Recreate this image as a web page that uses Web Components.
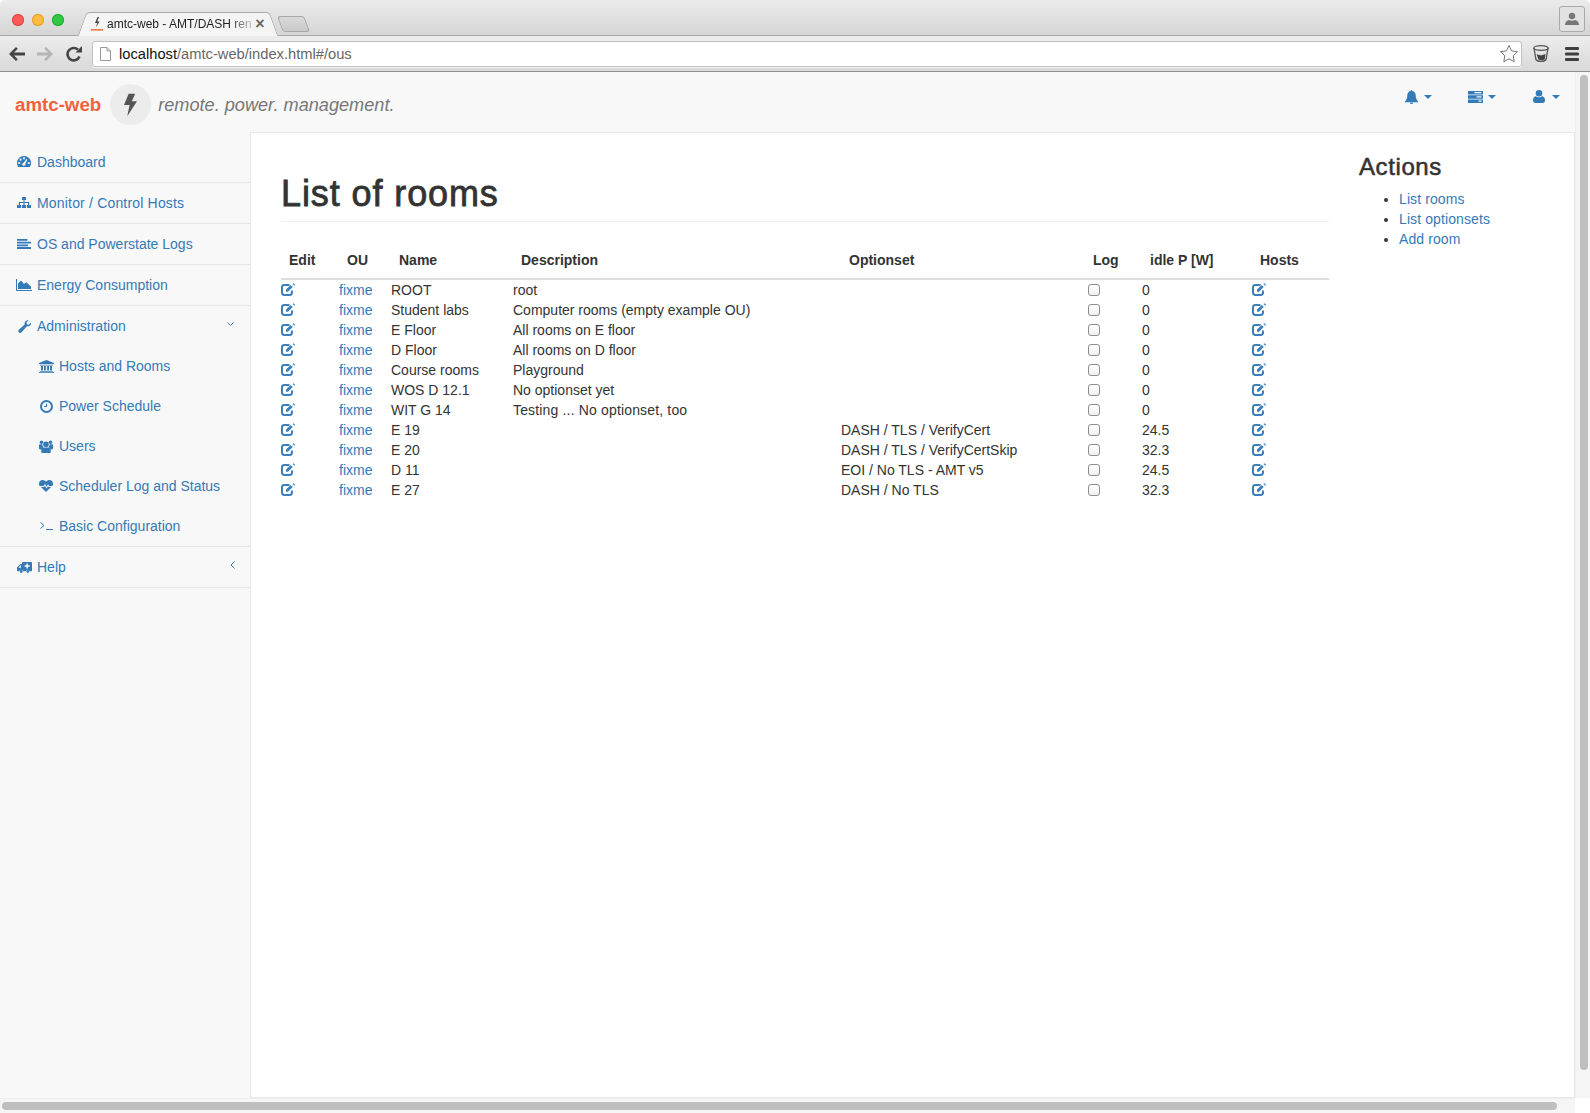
<!doctype html>
<html lang="en"><head><meta charset="utf-8"><title>amtc-web - AMT/DASH remote power management</title>
<style>
html,body{margin:0;height:100%;overflow:hidden;background:#fff}
body{font:14px/20px "Liberation Sans",Arial,sans-serif;color:#333}
</style></head>
<body>
<app-page>
  <browser-chrome slot="chrome"></browser-chrome>
  <top-nav slot="top"></top-nav>
  <side-nav slot="side">
    <nav-item icon="dashboard">Dashboard</nav-item>
    <nav-item icon="sitemap"><span style="letter-spacing:.18px">Monitor / Control Hosts</span></nav-item>
    <nav-item icon="lines">OS and Powerstate Logs</nav-item>
    <nav-item icon="area">Energy Consumption</nav-item>
    <nav-group icon="wrench" label="Administration" open>
      <nav-item sub icon="bank">Hosts and Rooms</nav-item>
      <nav-item sub icon="clock">Power Schedule</nav-item>
      <nav-item sub icon="users">Users</nav-item>
      <nav-item sub icon="heartbeat">Scheduler Log and Status</nav-item>
      <nav-item sub icon="terminal">Basic Configuration</nav-item>
    </nav-group>
    <nav-group icon="ambulance" label="Help"></nav-group>
  </side-nav>
  <rooms-view slot="main"></rooms-view>
  <actions-panel slot="aside"></actions-panel>
</app-page>
<script>
const ICONS={
 dashboard:[14,11,'<path d="M7 0C3.1 0 0 3.1 0 7c0 1.5.4 2.8 1.2 4h11.6c.8-1.2 1.2-2.5 1.2-4 0-3.9-3.1-7-7-7z"/><g fill="#f8f8f8"><circle cx="2.2" cy="7" r="1.1"/><circle cx="3.6" cy="3.7" r="1.1"/><circle cx="7" cy="2.3" r="1.1"/><circle cx="11.8" cy="7" r="1.1"/><circle cx="6.8" cy="8.2" r="1.5"/><path d="M6.2 7.6 9.4 2.9l1 .5-2.4 5z"/></g>'],
 sitemap:[14,11,'<path d="M5 0h4v3H5zM0 8h4v3H0zM5 8h4v3H5zM10 8h4v3h-4zM6.5 3h1v2h4.5v3h-1V6H7.5v2h-1V6H3v2H2V5h4.5z"/>'],
 lines:[14,10,'<path d="M0 0h10.5v1.8H0zM0 2.7h14v1.8H0zM0 5.4h11v1.8H0zM0 8.1h14v1.8H0z"/>'],
 area:[16,12,'<path d="M0 0h1v11h15v1H0z"/><path d="M2 10V4.5L5 1.5l3 3.6 2.2-1.8L15 7.5V10z"/>'],
 wrench:[13,13,'<path d="M12.8 2.6c.3.9.1 1.9-.5 2.7-.8 1-2.2 1.4-3.4 1L3.6 12.3c-.7.7-1.9.8-2.6.1-.8-.7-.8-1.9-.1-2.6l5.8-5.4c-.4-1.2 0-2.5 1-3.4.8-.7 1.9-1 2.9-.8L8.5 2.4l.4 1.9 1.8.5z"/>'],
 bank:[15,13,'<path d="M7.5 0 15 3v1H0V3zM1 4.8h13v.8H1zM2 6h2v4.5H2zM5 6h1.900v4.500H5zM8.100 6H10v4.500H8.100zM11 6h2v4.500h-2zM1 11h13v.8H1zM0 12.200h15V13H0z"/>'],
 clock:[13,13,'<path fill-rule="evenodd" d="M6.500 0a6.500 6.500 0 1 0 0 13 6.500 6.500 0 0 0 0-13zm0 2a4.500 4.500 0 1 1 0 9 4.500 4.500 0 0 1 0-9z"/><path d="M6 3.500h1.100v3.600H4v-1h2z"/>'],
 users:[14,13,'<circle cx="7" cy="4.300" r="2.800"/><circle cx="2.500" cy="2.300" r="1.800"/><circle cx="11.500" cy="2.300" r="1.800"/><path d="M0 5c0-.5.500-.8 1-.8h2.300c0 1.200.500 2.100 1.300 2.800-1.100.4-1.800 1.200-2.100 2.400H1.300C.5 9.400 0 8.900 0 8zM14 5c0-.5-.500-.8-1-.8h-2.300c0 1.200-.500 2.100-1.300 2.800 1.100.4 1.800 1.200 2.100 2.400h1.200c.8 0 1.300-.5 1.300-1.400zM4 7.500h6c1.100.3 1.700 1.400 1.700 3V12c0 .6-.5 1-1.100 1H3.400c-.6 0-1.100-.4-1.100-1v-1.500c0-1.600.6-2.700 1.700-3z"/>'],
 heartbeat:[14,12,'<path d="M7 12 1.900 7.100h3.300l.8-1.300 1.500 2.700L9 6.300l.4.800h2.700zM0 3.900C0 1.500 1.500 0 3.700 0 5 0 6.100.8 7 1.800 7.900.8 9 0 10.300 0 12.500 0 14 1.500 14 3.900c0 .8-.2 1.500-.6 2.200H10l-1-1.800-1.500 2.400L6 3.800 4.700 6.100H.6C.2 5.400 0 4.700 0 3.900z"/>'],
 terminal:[13,8,'<path fill="none" stroke="currentColor" stroke-width="1" d="M.5.500 4 3.500.5 6.500M6 7.500h7"/>'],
 ambulance:[15,11,'<path fill-rule="evenodd" d="M6 0h8c.6 0 1 .4 1 1v7.500c0 .4-.3.700-.7.700h-1.600a2 2 0 0 0-3.900 0H6.100a2 2 0 0 0-3.900 0H.8c-.4 0-.8-.3-.8-.7V5.800c0-.4.200-.7.400-.9l2.500-2.500c.3-.2.600-.4.900-.4H5V1c0-.6.400-1 1-1zm3.400 1.400v1.800H7.600v1.500h1.800v1.800h1.500V4.700h1.800V3.200h-1.800V1.400zM1.500 5.700H4V3.500H3.300z"/><circle cx="4.200" cy="9.500" r="1.400"/><circle cx="10.800" cy="9.500" r="1.400"/>'],
 bell:[13,14,'<path d="M6.500 0c.5 0 .8.400.8.900 2.100.4 3.400 2 3.400 4.200 0 3.100.7 4.800 2.300 6.300v.9H0v-.9c1.600-1.500 2.300-3.200 2.300-6.300 0-2.200 1.300-3.800 3.400-4.200 0-.5.300-.9.800-.9zM4.900 12.700h3.200c0 .8-.7 1.300-1.600 1.300s-1.600-.5-1.600-1.300z"/>'],
 tasks:[15,12,'<path fill-rule="evenodd" d="M0 0h15v3.500H0zm6.500 1v1.300h7V1zM0 4.300h15v3.500H0zm8.500 1v1.300h5V5.300zM0 8.500h15V12H0zm10.500 1v1.300h3V9.500z"/>'],
 user:[12,13,'<circle cx="6" cy="3.300" r="3.300"/><path d="M2.700 6.300c1.800 1.400 4.800 1.400 6.600 0C11 6.500 12 8 12 10.500c0 1.500-.9 2.500-2.300 2.500H2.300C.9 13 0 12 0 10.500 0 8 1 6.500 2.700 6.300z"/>'],
 edit:[14,13,'<path fill="none" stroke="currentColor" stroke-width="2" d="M8.500 2H3.400C2 2 1 3 1 4.400v5.200C1 11 2 12 3.400 12h5.200C10 12 11 11 11 9.600V7.500"/><path d="M5 6.400 9.700 2l2 2L7 8.700H5zM11.500.9 12 .4c.2-.2.400-.2.600 0l1.200 1.200c.2.200.2.400 0 .6l-.5.5z"/>']
};
function icon(name){const[w,h,b]=ICONS[name];return `<svg aria-hidden="true" width="${w}" height="${h}" viewBox="0 0 ${w} ${h}" fill="currentColor" style="display:block;flex:none">${b}</svg>`}
class Base extends HTMLElement{constructor(){super();this.attachShadow({mode:'open'})}}

customElements.define('app-page',class extends Base{connectedCallback(){this.shadowRoot.innerHTML=`<style>
:host{display:grid;width:1590px;height:1113px;grid-template-rows:72px 1fr 15px;grid-template-columns:1fr 15px;background:#f8f8f8}
.chrome{grid-column:1/3;display:block}
.page{display:flex;flex-direction:column;min-width:0;min-height:0}
.body{flex:1;display:flex;min-height:0}
.panel{flex:1;display:flex;background:#fff;border:1px solid #e7e7e7;min-width:0}
.vbar{background:#f5f5f5;border-left:1px solid #eee;display:flex;justify-content:center;box-sizing:border-box;padding:3px 3px 28px 4px}
.vbar i{display:block;width:8px;flex:none;background:#bfbfbf;border-radius:4px}
.hbar{background:#f5f5f5;border-top:1px solid #eee;box-sizing:border-box;padding:3px 18px 3px 2px;display:flex}
.hbar i{display:block;flex:1;background:#bfbfbf;border-radius:4px}
.corner{background:#fff}
</style>
<div class="chrome"><slot name="chrome"></slot></div>
<div class="page"><slot name="top"></slot>
 <div class="body"><slot name="side"></slot>
  <div class="panel"><slot name="main"></slot><slot name="aside"></slot></div>
 </div></div>
<div class="vbar"><i></i></div><div class="hbar"><i></i></div><div class="corner"></div>`}});

customElements.define('browser-chrome',class extends Base{connectedCallback(){this.shadowRoot.innerHTML=`<style>
:host{display:block;height:72px;background:#fff}
*{box-sizing:border-box}
.strip{height:36px;display:flex;align-items:flex-end;background:linear-gradient(#ebebeb,#d5d5d5);border-radius:5px 5px 0 0;border-bottom:1px solid #a9a9a9;padding-left:12px;position:relative}
.lights{display:flex;gap:8px;align-self:flex-start;margin-top:14px;width:78px}
.lights b{width:12px;height:12px;border-radius:50%;display:block}
.tab{position:relative;width:176px;height:24px;margin-bottom:-1px;background:#f4f4f4;border-top:1px solid #aaa;display:flex;align-items:center;padding:0 0 2px 1px;font:12px/16px "Liberation Sans",Arial,sans-serif;color:#222;z-index:1}
.tab::before,.tab::after{content:"";position:absolute;top:-1px;bottom:0;width:16px;background:#f4f4f4;border:1px solid #aaa;border-bottom:0}
.tab::before{left:-8px;transform:skewX(-20deg);border-right:0;border-radius:4px 0 0 0}
.tab::after{right:-8px;transform:skewX(20deg);border-left:0;border-radius:0 4px 0 0}
.fav,.title,.x{position:relative;z-index:1}
.fav{width:12px;height:14px;margin-right:4px;flex:none;color:#444}
.title{flex:none;width:144px;white-space:nowrap;-webkit-mask-image:linear-gradient(90deg,#000 84%,rgba(0,0,0,.25) 100%);mask-image:linear-gradient(90deg,#000 84%,rgba(0,0,0,.25) 100%)}
.x{width:12px;text-align:center;color:#666;font-size:16px;font-weight:700;margin-left:3px}
.new{width:27px;height:16px;margin:0 0 3px 14px;transform:skewX(20deg);background:linear-gradient(#d9d9d9,#c9c9c9);border:1px solid #a8a8a8;border-radius:3px}
.sp{flex:1}
.prof{align-self:flex-start;margin:6px 5px 0 0;width:26px;height:26px;border:1px solid #a9a9a9;border-radius:3px;background:#e2e2e2;color:#777;display:flex;align-items:center;justify-content:center}
.bar{height:36px;display:flex;align-items:center;background:linear-gradient(#ececec,#d9d9d9);border-bottom:1px solid #8f8f8f;padding:0 11px 0 8px}
.btn{display:flex;align-items:center;justify-content:center;flex:none}
.back{width:18px;color:#444}.fwd{margin-left:11px;width:16px;color:#b5b5b5}.rel{margin-left:12px;width:18px;color:#444}
.addr{flex:1;margin:0 11px 0 9px;height:26px;background:#fff;border:1px solid #c0c0c0;border-radius:3px;display:flex;align-items:center;padding:0 2px 0 7px;font:14.700px/20px "Liberation Sans",Arial,sans-serif;color:#666;box-shadow:0 1px 0 #f2f2f2}
.addr svg.doc{margin-right:8px;flex:none}
.addr span{flex:1;white-space:nowrap}.addr b{font-weight:400;color:#111}
.cup{color:#444;margin-right:16px}
.burger{color:#3f3f3f}
</style>
<div class="strip">
 <div class="lights"><b style="background:#fc5b57;box-shadow:inset 0 0 0 1px #e2463f"></b><b style="background:#fdbc40;box-shadow:inset 0 0 0 1px #dfa023"></b><b style="background:#33c748;box-shadow:inset 0 0 0 1px #1dad2b"></b></div>
 <div class="tab">
  <svg class="fav" viewBox="0 0 12 14"><path fill="#444" d="M6.500 0 4 6h2.200L4.800 10.500 8.500 4.500H6.200L8 0z"/><path fill="#f2753f" d="M0 12h12v1.600H0z"/></svg>
  <span class="title">amtc-web - AMT/DASH ren</span><span class="x">×</span>
 </div>
 <div class="new"></div><div class="sp"></div>
 <div class="prof"><svg width="14" height="14" viewBox="0 0 14 14" fill="currentColor"><circle cx="7" cy="4" r="3.200"/><path d="M0 13c0-3 2-4.500 4-5 1.700 1 4.300 1 6 0 2 .5 4 2 4 5z"/></svg></div>
</div>
<div class="bar">
 <div class="btn back"><svg width="16" height="14" viewBox="0 0 16 14"><path fill="currentColor" d="M7 0l1.800 1.800-3.800 3.700H16v3H5l3.800 3.700L7 14 0 7z"/></svg></div>
 <div class="btn fwd"><svg width="16" height="14" viewBox="0 0 16 14"><path fill="currentColor" d="M9 0 7.200 1.800 11 5.500H0v3h11l-3.800 3.700L9 14l7-7z"/></svg></div>
 <div class="btn rel"><svg width="16" height="16" viewBox="0 0 16 16"><path fill="none" stroke="currentColor" stroke-width="2.600" d="M13.500 10.500A6.200 6.200 0 1 1 12 3.600"/><path fill="currentColor" d="M9.500 6.500H16V0z"/></svg></div>
 <div class="addr">
  <svg class="doc" width="11" height="14" viewBox="0 0 11 14"><path fill="#fff" stroke="#9a9a9a" d="M.5.500h6.500l3.500 3.500v9.500H.5z"/><path fill="none" stroke="#9a9a9a" d="M7 .5V4h3.500"/></svg>
  <span><b>localhost</b>/amtc-web/index.html#/ous</span>
  <svg width="20" height="19" viewBox="0 0 20 19"><path fill="#fff" stroke="#777" d="M10 1.500l2.600 5.400 5.900.8-4.300 4.100 1 5.900-5.200-2.800-5.200 2.800 1-5.900L1.500 7.700l5.900-.8z"/></svg>
 </div>
 <div class="btn cup"><svg width="16" height="17" viewBox="0 0 16 17"><ellipse cx="8" cy="3" rx="7.200" ry="2.300" fill="none" stroke="#555" stroke-width="1.300"/><path fill="none" stroke="#555" stroke-width="1.300" d="M1 3l1.800 11c.3 1.500 2.500 2.300 5.200 2.300s4.900-.8 5.200-2.300L15 3"/><path fill="#444" d="M3.500 9c1 1 2 .4 3 1s2 .5 3 0 2-.5 3-1l-.8 5.500c-1.500 1-4.700 1-6.300 0z"/></svg></div>
 <div class="btn burger"><svg width="14" height="14" viewBox="0 0 14 14" fill="currentColor"><rect width="14" height="3" rx="1"/><rect y="5.500" width="14" height="3" rx="1"/><rect y="11" width="14" height="3" rx="1"/></svg></div>
</div>`}});

customElements.define('top-nav',class extends Base{connectedCallback(){const caret='<i class="caret"></i>';this.shadowRoot.innerHTML=`<style>
:host{display:flex;height:60px;flex:none;align-items:center;padding:0 15px;background:#f8f8f8}
.brand{font-weight:700;font-size:18.700px;line-height:24px;color:#f0623c;margin-top:5px}
.bolt{width:41px;height:41px;border-radius:50%;background:#ececec;margin:5px 7px 0 9px;display:flex;align-items:center;justify-content:center;color:#555;flex:none}
.tag{font-style:italic;font-size:18.150px;line-height:24px;color:#777;margin-top:5px;flex:1}
.dd{display:flex;align-items:center;color:#337ab7;margin-bottom:11px}
.caret{display:block;width:0;height:0;border:4px solid transparent;border-top-color:#337ab7;border-bottom:0;margin-left:6px}
</style>
<span class="brand">amtc-web</span>
<span class="bolt"><svg width="13" height="24" viewBox="0 0 14 24" fill="currentColor"><path d="M5 0h7L8.500 8 14 8 3.500 24l2.500-12L0 12z"/></svg></span>
<span class="tag">remote. power. management.</span>
<span class="dd">${icon('bell')}${caret}</span>
<span class="dd" style="margin-left:36px">${icon('tasks')}<i class="caret" style="margin-left:5px"></i></span>
<span class="dd" style="margin-left:37px">${icon('user')}<i class="caret" style="margin-left:7px"></i></span>`}});

customElements.define('side-nav',class extends Base{connectedCallback(){this.shadowRoot.innerHTML=`<style>:host{display:block;width:250px;flex:none;padding-top:10px;background:#f8f8f8;box-sizing:border-box}</style><slot></slot>`}});

customElements.define('nav-item',class extends Base{connectedCallback(){const sub=this.hasAttribute('sub');this.shadowRoot.innerHTML=`<style>
:host{display:block;color:#337ab7}
a{display:flex;align-items:center;color:inherit;text-decoration:none;box-sizing:border-box;
 height:${sub?40:41}px;padding:${sub?'0 0 0 37px':'0 15px 1px'};${sub?'':'border-bottom:1px solid #e7e7e7;'}}
.i{width:18px;margin-right:4px;display:flex;justify-content:center;flex:none}
</style><a href="#"><span class="i">${icon(this.getAttribute('icon'))}</span><slot></slot></a>`}});

customElements.define('nav-group',class extends Base{connectedCallback(){const open=this.hasAttribute('open');
 const arrow=open?'<path d="M.5.500 3.500 3.500 6.500.5"/>':'<path d="M4.500.5 1 4l3.500 3.500"/>';
 this.shadowRoot.innerHTML=`<style>
:host{display:block;color:#337ab7;border-bottom:1px solid #e7e7e7}
.h{display:flex;align-items:center;height:40px;padding:0 15px;box-sizing:border-box}
.i{width:18px;margin-right:4px;display:flex;justify-content:center;flex:none}
.l{flex:1}
svg.a{fill:none;stroke:currentColor;stroke-width:1;margin:${open?'-4px 1px 0 0':'-5px 0 0 0'};display:block}
</style><a class="h"><span class="i">${icon(this.getAttribute('icon'))}</span><span class="l">${this.getAttribute('label')}</span>
<svg class="a" width="${open?7:5}" height="${open?5:8}" viewBox="0 0 ${open?7:5} ${open?5:8}">${arrow}</svg></a>
<slot></slot>`}});

const ROOMS=[['ROOT','root','',"0"],['Student labs','Computer rooms (empty example OU)','',"0"],['E Floor','All rooms on E floor','',"0"],['D Floor','All rooms on D floor','',"0"],['Course rooms','Playground','',"0"],['WOS D 12.1','No optionset yet','',"0"],['WIT G 14','<span style="letter-spacing:.16px">Testing ... No optionset, too</span>','',"0"],['E 19','','DASH / TLS / VerifyCert','24.5'],['E 20','','DASH / TLS / VerifyCertSkip','32.3'],['D 11','','EOI / No TLS - AMT v5','24.5'],['E 27','','DASH / No TLS','32.3']];
customElements.define('rooms-view',class extends Base{connectedCallback(){
 const ed=`<a class="ed" href="#">${icon('edit')}</a>`;
 this.shadowRoot.innerHTML=`<style>
:host{display:block;width:1108px;flex:none;padding:0 30px;box-sizing:border-box}
h1{font-size:36px;font-weight:500;line-height:40px;margin:0;padding:41px 0 7px;border-bottom:1px solid #eee;color:#333;letter-spacing:.9px;-webkit-text-stroke:.8px #333}
table{table-layout:fixed;border-collapse:collapse;width:1048px;margin-top:20px}
th{padding:8px;text-align:left;font-weight:700;line-height:20px;border-bottom:2px solid #ddd}
td{padding:0;line-height:20px;height:20px;white-space:nowrap}
a{color:#337ab7;text-decoration:none}
.ed{display:block;color:#3b80bc;margin-top:-1px}
input{appearance:none;-webkit-appearance:none;display:block;width:12px;height:12px;margin:0 0 1px 3px;box-sizing:border-box;border:1px solid #8d8d8d;border-radius:3px;background:linear-gradient(#fff,#f0f0f0)}
</style>
<h1>List of rooms</h1>
<table><colgroup><col style="width:58px"><col style="width:52px"><col style="width:122px"><col style="width:328px"><col style="width:244px"><col style="width:57px"><col style="width:110px"><col style="width:77px"></colgroup>
<thead><tr><th>Edit</th><th>OU</th><th>Name</th><th>Description</th><th>Optionset</th><th>Log</th><th>idle P [W]</th><th>Hosts</th></tr></thead>
<tbody>${ROOMS.map(r=>`<tr><td>${ed}</td><td><a href="#">fixme</a></td><td>${r[0]}</td><td>${r[1]}</td><td>${r[2]}</td><td><input type="checkbox" aria-label="Log"></td><td>${r[3]}</td><td>${ed}</td></tr>`).join('')}</tbody></table>`}});

customElements.define('actions-panel',class extends Base{connectedCallback(){this.shadowRoot.innerHTML=`<style>
:host{display:block;flex:1;min-width:0}
h3{font-size:24px;font-weight:500;line-height:26px;margin:21px 0 9px;color:#333;letter-spacing:.6px;-webkit-text-stroke:.55px #333}
ul{margin:0;padding:0 0 0 40px}
a{color:#337ab7;text-decoration:none;letter-spacing:.1px}
</style><h3>Actions</h3><ul><li><a href="#">List rooms</a></li><li><a href="#">List optionsets</a></li><li><a href="#">Add room</a></li></ul>`}});
</script>
</body></html>
